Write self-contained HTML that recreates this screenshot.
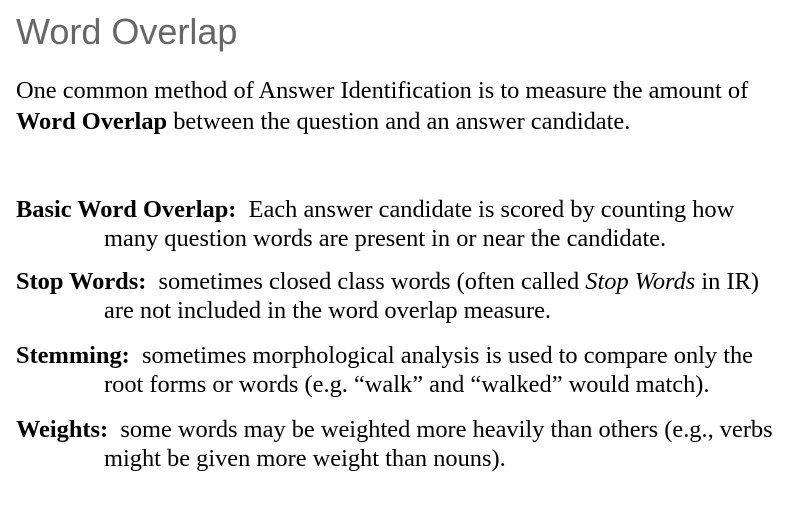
<!DOCTYPE html>
<html><head><style>
body{margin:0;width:800px;height:505px;background:#fff;position:relative;overflow:hidden}
.t{position:absolute;left:16px;top:11px;font:36px "Liberation Sans",sans-serif;color:#666}
.l{position:absolute;white-space:nowrap;font:24.4px "Liberation Serif",serif;color:#000;line-height:30px}
</style></head><body>
<div class="t">Word Overlap</div>
<div class="l" style="left:16px;top:76px">One common method of Answer Identification is to measure the amount of</div>
<div class="l" style="left:16px;top:107px"><b>Word Overlap</b> between the question and an answer candidate.</div>
<div class="l" style="left:16px;top:195px"><b>Basic Word Overlap:</b>&nbsp; Each answer candidate is scored by counting how</div>
<div class="l" style="left:104px;top:224px">many question words are present in or near the candidate.</div>
<div class="l" style="left:16px;top:267px"><b>Stop Words:</b>&nbsp; sometimes closed class words (often called <i>Stop Words</i> in IR)</div>
<div class="l" style="left:104px;top:296px">are not included in the word overlap measure.</div>
<div class="l" style="left:16px;top:341px"><b>Stemming:</b>&nbsp; sometimes morphological analysis is used to compare only the</div>
<div class="l" style="left:104px;top:370px">root forms or words (e.g. “walk” and “walked” would match).</div>
<div class="l" style="left:16px;top:415px"><b>Weights:</b>&nbsp; some words may be weighted more heavily than others (e.g., verbs</div>
<div class="l" style="left:104px;top:444px">might be given more weight than nouns).</div>
</body></html>
